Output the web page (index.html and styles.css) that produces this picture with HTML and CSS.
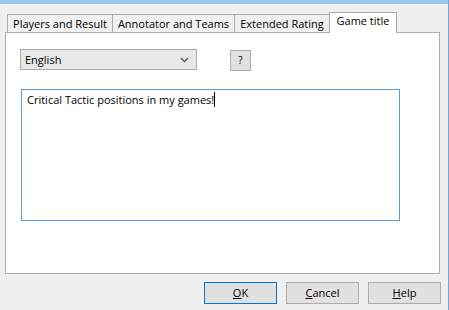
FILE: index.html
```html
<!DOCTYPE html>
<html lang="en">
<head>
  <meta charset="UTF-8">
  <title>Game properties</title>
  <link rel="stylesheet" href="styles.css">
</head>
<body>
  <div class="titlebar"></div>

  <div class="dialog">
    <!-- Tabs -->
    <div class="tabs">
      <div class="tab tab-players">Players and Result</div>
      <div class="tab tab-annotator">Annotator and Teams</div>
      <div class="tab tab-rating">Extended Rating</div>
      <div class="tab active">Game title</div>
    </div>

    <div class="panel">
      <div class="lang-row">
        <div class="select">
          <span>English</span>
          <svg class="chevron" width="9" height="6" viewBox="0 0 9 6">
            <path d="M1 1 L4.5 4.5 L8 1" fill="none" stroke="#555" stroke-width="1.4"/>
          </svg>
        </div>
        <div class="help-btn">?</div>
      </div>

      <div class="title-box">Critical Tactic positions in my games!<span class="caret"></span></div>
    </div>

    <div class="buttons">
      <div class="btn default"><u>O</u>K</div>
      <div class="btn"><u>C</u>ancel</div>
      <div class="btn"><u>H</u>elp</div>
    </div>
  </div>
</body>
</html>
```

FILE: styles.css
```css
body {
  margin: 0;
  width: 448px;
  height: 310px;
  background-color: #f0f0f0;
  border-right: 1px solid #6aa7e0;
  font-family: "Open Sans", "Noto Sans", sans-serif;
  font-size: 11px;
  color: #000;
  overflow: hidden;
}

.titlebar {
  height: 4px;
  background-color: #99c9f1;
}

.dialog {
  padding: 0 0 0 5px;
}

.tabs {
  display: flex;
  align-items: flex-end;
  height: 28px;
  padding-left: 2px;
}

.tab {
  box-sizing: border-box;
  height: 18px;
  line-height: 17px;
  text-align: center;
  border: 1px solid #adadad;
  border-bottom: none;
  margin-left: -1px;
  background-color: #f0f0f0;
}

.tab-players {
  width: 106px;
  margin-left: 0;
}

.tab-annotator {
  width: 123px;
}

.tab-rating {
  width: 96px;
}

.tab.active {
  position: relative;
  width: 68px;
  height: 21px;
  line-height: 16px;
  margin-bottom: -1px;
  background-color: #fff;
  z-index: 1;
}

.panel {
  width: 433px;
  height: 240px;
  background-color: #fff;
  border: 1px solid #adadad;
}

.lang-row {
  display: flex;
  align-items: flex-start;
  margin: 16px 0 0 14px;
}

.select {
  display: flex;
  align-items: center;
  justify-content: space-between;
  box-sizing: border-box;
  width: 177px;
  height: 21px;
  padding: 0 7px 0 4px;
  background-color: #e8e8e8;
  border: 1px solid #acacac;
}

.help-btn {
  box-sizing: border-box;
  width: 21px;
  height: 21px;
  margin: 1px 0 0 33px;
  background-color: #e1e1e1;
  border: 1px solid #adadad;
  text-align: center;
  line-height: 18px;
  font-size: 10px;
}

.title-box {
  box-sizing: border-box;
  width: 379px;
  height: 132px;
  margin: 18px 0 0 15px;
  padding: 1px 5px;
  border: 1px solid #569de5;
  line-height: 18px;
}

.caret {
  display: inline-block;
  width: 1px;
  height: 15px;
  background-color: #000;
  vertical-align: -3px;
}

.buttons {
  display: flex;
  justify-content: flex-end;
  gap: 9px;
  width: 436px;
  margin-top: 8px;
}

.btn {
  box-sizing: border-box;
  width: 73px;
  height: 22px;
  line-height: 19px;
  text-align: center;
  background-color: #e1e1e1;
  border: 1px solid #adadad;
}

.btn.default {
  border-color: #0078d7;
}
```
